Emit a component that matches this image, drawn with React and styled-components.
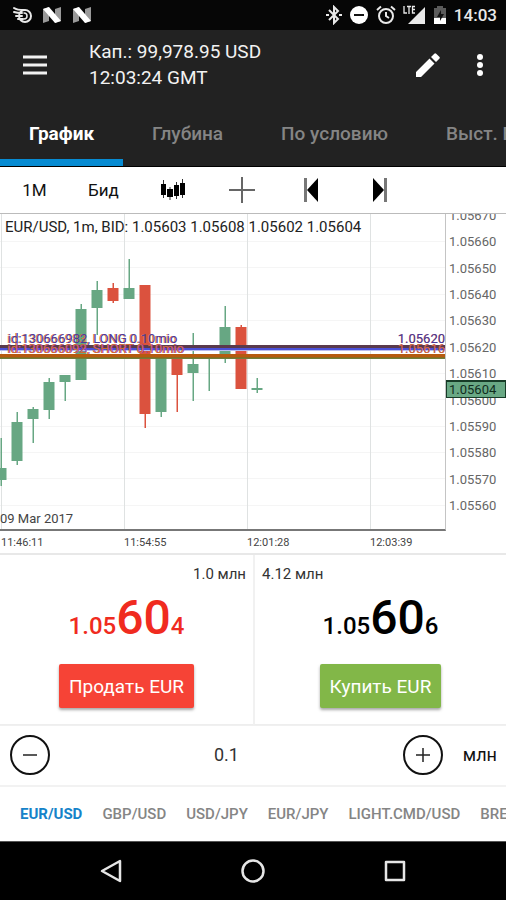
import React, { useState } from 'react';
import styled, { createGlobalStyle } from 'styled-components';

const GlobalStyle = createGlobalStyle`
  *, *::before, *::after { box-sizing: border-box; }
  body { margin: 0; background: #fff; font-family: Roboto, "Noto Sans", sans-serif; color: #111; }
  button, input { font: inherit; color: inherit; border: 0; padding: 0; background: none; }
  button { cursor: pointer; }
`;

const Screen = styled.div`
  display: flex;
  flex-direction: column;
  min-height: 100vh;
  overflow: hidden;
`;

const Icon = styled.svg`
  display: block;
  flex: none;
  width: ${(p) => p.$w}px;
  height: ${(p) => p.$h || p.$w}px;
`;

const StatusBar = styled.header`
  display: flex;
  align-items: center;
  justify-content: space-between;
  height: 30px;
  padding: 0 9px 0 12px;
  background: #060606;
  color: #e9e9e9;
`;

const StatusGroup = styled.div`
  display: flex;
  align-items: center;
  gap: ${(p) => p.$gap}px;
`;

const Clock = styled.time`
  font-size: 17px;
  font-weight: 500;
  line-height: 30px;
`;

const AppBar = styled.div`
  display: flex;
  align-items: center;
  height: 70px;
  padding: 0 14px 0 23px;
  background: #222;
  color: #f2f2f2;
`;

const IconButton = styled.button`
  display: grid;
  place-items: center;
  width: 24px;
  height: 40px;
`;

const Account = styled.div`
  flex: 1;
  padding-left: 42px;
  font-size: 19px;
  line-height: 26px;
`;

const Actions = styled.div`
  display: flex;
  gap: 28px;
`;

const Tabs = styled.nav`
  display: flex;
  height: 67px;
  overflow: hidden;
  background: #222;
  border-bottom: 1px solid #000;
`;

const Tab = styled.button`
  flex: none;
  padding: 7px 29px 0;
  font-size: 19px;
  font-weight: ${(p) => (p.$active ? 700 : 500)};
  color: ${(p) => (p.$active ? '#fff' : '#858585')};
  border-bottom: 7px solid ${(p) => (p.$active ? '#078bd2' : 'transparent')};
`;

const Toolbar = styled.div`
  display: flex;
  align-items: center;
  height: 46px;
`;

const Tool = styled.button`
  display: grid;
  place-items: center;
  width: 69px;
  height: 46px;
  font-size: 17px;
`;

const Chart = styled.section`
  display: grid;
  grid-template-columns: minmax(0, 1fr) 60px;
  grid-template-rows: 317px 22px;
  border-top: 1px solid #bbb;
  border-bottom: 2px solid #e8e8e8;
`;

const Plot = styled.div`
  position: relative;
  border-right: 1px solid #c4c4c4;
  border-bottom: 2px solid #777;
  overflow: hidden;
`;

const PlotSvg = styled.svg`
  display: block;
  width: 100%;
  height: 100%;
`;

const Legend = styled.div`
  position: absolute;
  top: 4px;
  left: 5px;
  font-size: 15px;
  line-height: 18px;
  color: #222;
  white-space: nowrap;
`;

const ChartDate = styled.div`
  position: absolute;
  left: 0;
  bottom: 2px;
  font-size: 13px;
  line-height: 16px;
  color: #444;
`;

const OrderLabel = styled.div`
  position: absolute;
  top: ${(p) => p.$top}px;
  left: ${(p) => p.$left}px;
  right: 0;
  display: flex;
  justify-content: space-between;
  font-size: 13px;
  line-height: 14px;
  color: ${(p) => p.$color};
`;

const OrderLine = styled.div`
  position: absolute;
  left: 0;
  right: 0;
  top: ${(p) => p.$top}px;
  height: ${(p) => p.$size}px;
  border-top: ${(p) => p.$edge}px solid ${(p) => p.$first};
  background: ${(p) => p.$second};
  border-bottom: 1px solid ${(p) => p.$third};
`;

const PriceAxis = styled.div`
  position: relative;
  overflow: hidden;
`;

const AxisList = styled.div`
  display: grid;
  grid-auto-rows: 1fr;
  height: 317px;
  margin-top: -12px;
  padding-left: 3px;
  align-items: center;
  font-size: 13px;
  color: #666;
`;

const LastPrice = styled.div`
  position: absolute;
  top: 166px;
  left: 0;
  right: 0;
  padding-left: 2px;
  font-size: 13px;
  line-height: 15px;
  color: #102c1d;
  background: #69a884;
  border: 1px solid #173b27;
  border-top-width: 2px;
`;

const TimeAxis = styled.div`
  grid-column: 1 / -1;
  display: grid;
  grid-template-columns: 123fr 123fr 123fr 136fr;
  padding-left: 1px;
  font-size: 11px;
  line-height: 24px;
  color: #444;
`;

const Quotes = styled.section`
  display: grid;
  grid-template-columns: 1fr 1fr;
  height: 170px;
`;

const Quote = styled.div`
  display: flex;
  flex-direction: column;
  align-items: center;
  border-bottom: 1px solid #eee;
  border-left: ${(p) => (p.$side === 'buy' ? '2px solid #f1f1f1' : '0')};
`;

const Volume = styled.div`
  align-self: ${(p) => (p.$side === 'sell' ? 'flex-end' : 'flex-start')};
  padding: 10px 7px 0;
  font-size: 15px;
  line-height: 18px;
  color: #333;
`;

const Price = styled.div`
  margin-top: 7px;
  height: 56px;
  font-size: 24px;
  font-weight: 500;
  line-height: 56px;
  color: ${(p) => (p.$side === 'sell' ? '#f02b20' : '#000')};
`;

const BigDigits = styled.strong`
  font-size: 48px;
  font-weight: 500;
`;

const TradeButton = styled.button`
  height: 44px;
  margin-top: 18px;
  padding: 0 10px;
  font-size: 19px;
  color: #fff;
  border-radius: 2px;
  background: ${(p) => (p.$side === 'sell' ? '#f64336' : '#82b748')};
  box-shadow: 0 2px 3px rgba(0, 0, 0, 0.35);
`;

const Amount = styled.section`
  display: flex;
  align-items: center;
  height: 62px;
  padding: 0 9px 2px 10px;
  border-top: 1px solid #f0f0f0;
  border-bottom: 2px solid #f2f2f2;
`;

const StepButton = styled.button`
  flex: none;
  display: grid;
  place-items: center;
  width: 40px;
  height: 40px;
  border: 2px solid #111;
  border-radius: 50%;
`;

const AmountInput = styled.input`
  flex: 1;
  min-width: 0;
  text-align: center;
  font-size: 18px;
  color: #333;
`;

const Unit = styled.label`
  margin-left: 20px;
  font-size: 18px;
`;

const Pairs = styled.nav`
  display: flex;
  gap: 20px;
  height: 54px;
  padding-left: 20px;
  overflow: hidden;
`;

const Pair = styled.button`
  flex: none;
  font-size: 15px;
  font-weight: ${(p) => (p.$active ? 700 : 500)};
  color: ${(p) => (p.$active ? '#1583c9' : '#858585')};
`;

const NavBar = styled.footer`
  flex: 1;
  display: grid;
  grid-template-columns: repeat(3, 1fr);
  place-items: center;
  min-height: 58px;
  padding: 0 40px;
  color: #e6e6e6;
  background: #000;
  border-top: 1px solid #555;
`;

const candles = [
  [1, 468, 480, 438, 486, 1], [17, 422, 461, 412, 465, 1], [33, 409, 419, 407, 443, 1],
  [49, 382, 410, 378, 419, 1], [65, 375, 382, 375, 401, 1], [81, 309, 380, 304, 380, 1],
  [97, 290, 308, 281, 335, 1], [113, 288, 301, 283, 303, 0], [129, 288, 299, 259, 299, 1],
  [145, 285, 414, 285, 428, 0], [161, 357, 412, 357, 417, 1], [177, 357, 375, 357, 412, 0],
  [193, 364, 373, 333, 401, 1], [209, 357, 359, 357, 391, 1], [225, 327, 354, 306, 363, 1],
  [241, 327, 389, 325, 389, 0], [257, 388, 390, 378, 393, 1],
];
const gridY = [241, 267, 294, 320, 346, 373, 399, 426, 452, 478, 505];
const gridX = [1, 124, 247, 370];
const axisPrices = ['1.05670', '1.05660', '1.05650', '1.05640', '1.05630', '1.05620', '1.05610', '1.05600', '1.05590', '1.05580', '1.05570', '1.05560'];
const times = ['11:46:11', '11:54:55', '12:01:28', '12:03:39'];
const tabs = ['График', 'Глубина', 'По условию', 'Выст. Бид/Оффер'];
const pairs = ['EUR/USD', 'GBP/USD', 'USD/JPY', 'EUR/JPY', 'LIGHT.CMD/USD', 'BRENT.CMD/USD'];

const NougatIcon = () => (
  <Icon $w={20} $h={18} viewBox="0 0 20 18" aria-hidden="true">
    <path d="M1 3 7 1v14l-6 2zM13 3l6-2v14l-6 2z" fill="#999" />
    <path d="M1 3 7 1l12 14-6 2z" fill="#fff" />
  </Icon>
);

const StatusIcons = () => (
  <>
    <Icon $w={16} $h={20} viewBox="0 0 16 20" fill="none" stroke="currentColor" strokeWidth="2" aria-label="Bluetooth">
      <path d="m3 5 9 9-4 4V2l4 4-9 9M0 10h3M13 10h3" />
    </Icon>
    <Icon $w={20} viewBox="0 0 20 20" aria-label="Не беспокоить">
      <circle cx="10" cy="10" r="9" fill="#fff" />
      <path d="M5 10h10" stroke="#111" strokeWidth="2" />
    </Icon>
    <Icon $w={20} viewBox="0 0 20 20" fill="none" stroke="currentColor" strokeWidth="2" aria-label="Будильник">
      <circle cx="10" cy="11" r="7" />
      <path d="M10 7v4l3 2M1 5l4-3.500M19 5l-4-3.500" />
    </Icon>
    <Icon $w={23} $h={20} viewBox="0 0 23 20" fill="none" stroke="currentColor" aria-label="LTE">
      <path d="M22 2v17H5z" fill="currentColor" stroke="none" />
      <path d="M0 0h13v9L10 11H0z" fill="#060606" stroke="none" />
      <path d="M1 1v7h3M4 1.500h4M6 1v8M12 1.500H9.500v6.500H12M9.500 4.500H12" strokeWidth="1.300" />
    </Icon>
    <Icon $w={14} $h={20} viewBox="0 0 14 20" aria-label="Батарея">
      <path d="M4 1h6v2h3v16H1V3h3z" fill="#5b5b5b" />
      <path d="M1 13h12v6H1z" fill="#fff" />
      <path d="M8 5 4 12h3v4l4-7H8z" fill="#111" />
    </Icon>
  </>
);

const SkipIcon = ({ forward }) => (
  <Icon $w={16} $h={26} viewBox="0 0 16 26" aria-hidden="true">
    {forward ? (
      <>
        <path d="M1 1v24L12 13z" fill="#000" />
        <path d="M12 1h3v24h-3z" fill="#777" />
      </>
    ) : (
      <>
        <path d="M15 1v24L4 13z" fill="#000" />
        <path d="M1 1h3v24H1z" fill="#777" />
      </>
    )}
  </Icon>
);

const PricePlot = () => (
  <PlotSvg viewBox="0 214 445 315" preserveAspectRatio="none" role="img" aria-label="EUR/USD">
    {gridY.map((y) => <path key={y} d={`M0 ${y + 0.5}H445`} stroke="#f5f5f5" />)}
    {gridX.map((x) => <path key={x} d={`M${x + 0.5} 214V529`} stroke="#dfe2e2" />)}
    {candles.map(([x, top, bottom, high, low, up]) => (
      <g key={x} fill={up ? '#67a783' : '#db523e'}>
        <rect x={x - 0.5} y={high} width="1.500" height={low - high} />
        <rect x={x - 5.5} y={top} width="11" height={bottom - top} />
      </g>
    ))}
  </PlotSvg>
);

export default function App() {
  const [tab, setTab] = useState(0);
  const [pair, setPair] = useState(0);
  const [amount, setAmount] = useState('0.1');
  const step = (d) => setAmount((a) => Math.max(0, (parseFloat(a) || 0) + d).toFixed(1));

  return (
    <Screen>
      <GlobalStyle />
      <StatusBar>
        <StatusGroup $gap={10}>
          <Icon $w={20} $h={18} viewBox="0 0 20 18" fill="none" stroke="currentColor" strokeWidth="2" strokeLinecap="round" aria-hidden="true">
            <circle cx="13" cy="10" r="6" />
            <path d="M2 2c3 2 6 2 10 2M2 6c3 1 5 1 8 1M4 10h6M6 13h5" />
            <path d="M12 7a3 3 0 0 1 0 6" strokeWidth="1.500" />
          </Icon>
          <NougatIcon />
          <NougatIcon />
        </StatusGroup>
        <StatusGroup $gap={7}>
          <StatusIcons />
          <Clock>14:03</Clock>
        </StatusGroup>
      </StatusBar>

      <AppBar>
        <IconButton aria-label="Меню">
          <Icon $w={24} $h={20} viewBox="0 0 24 20" aria-hidden="true">
            <path d="M0 2h24M0 10h24M0 18h24" stroke="currentColor" strokeWidth="3" />
          </Icon>
        </IconButton>
        <Account>
          <div>Кап.: 99,978.95 USD</div>
          <div>12:03:24 GMT</div>
        </Account>
        <Actions>
          <IconButton aria-label="Изменить">
            <Icon $w={24} viewBox="0 0 24 24" fill="#fff" aria-hidden="true">
              <path d="M0 19v5h5L18.500 10.500l-5-5zM23.300 5.700a1.300 1.300 0 0 0 0-1.900L20.200.7a1.300 1.300 0 0 0-1.900 0L15 4l5 5z" />
            </Icon>
          </IconButton>
          <IconButton aria-label="Ещё">
            <Icon $w={8} $h={22} viewBox="0 0 8 22" fill="#fff" aria-hidden="true">
              <circle cx="4" cy="3" r="3" /><circle cx="4" cy="11" r="3" /><circle cx="4" cy="19" r="3" />
            </Icon>
          </IconButton>
        </Actions>
      </AppBar>

      <Tabs>
        {tabs.map((t, i) => <Tab key={t} $active={i === tab} onClick={() => setTab(i)}>{t}</Tab>)}
      </Tabs>

      <Toolbar>
        <Tool>1M</Tool>
        <Tool>Бид</Tool>
        <Tool aria-label="Тип графика">
          <Icon $w={26} $h={24} viewBox="0 0 26 24" aria-hidden="true">
            <path d="M3.500 2v18M10 9v13M16.500 4v17M22.500 1v19" stroke="#333" />
            <path d="M1 6h5v11H1zM7 11h6v8H7zM14 7h5v11h-5zM20 5h5v12h-5z" />
          </Icon>
        </Tool>
        <Tool aria-label="Перекрестие">
          <Icon $w={26} viewBox="0 0 26 26" aria-hidden="true">
            <path d="M13 0v26M0 13h26" stroke="#666" strokeWidth="2" />
          </Icon>
        </Tool>
        <Tool aria-label="В начало"><SkipIcon /></Tool>
        <Tool aria-label="В конец"><SkipIcon forward /></Tool>
      </Toolbar>

      <Chart>
        <Plot>
          <PricePlot />
          <Legend>EUR/USD, 1m, BID: 1.05603 1.05608 1.05602 1.05604</Legend>
          <OrderLabel $top={118} $left={7} $color="#e07a3c"><span>id:130666983, LONG 0.10mio</span><span>1.05620</span></OrderLabel>
          <OrderLabel $top={118} $left={8} $color="#4a3a9c"><span>id:130666982, LONG 0.10mio</span><span>1.05620</span></OrderLabel>
          <OrderLine $top={131} $size={6} $edge={3} $first="#5a3a4c" $second="#4a50d8" $third="#b9bdf2" />
          <OrderLabel $top={128} $left={8} $color="#9a3fb0"><span>id:130666098, SHORT 0.10mio</span><span>1.05616</span></OrderLabel>
          <OrderLabel $top={128} $left={7} $color="#cf6a35"><span>id:130666092, SHORT 0.10mio</span><span>1.05616</span></OrderLabel>
          <OrderLine $top={140} $size={5} $edge={3} $first="#b65a10" $second="#8a6a20" $third="#6f7d3c" />
          <ChartDate>09 Mar 2017</ChartDate>
        </Plot>
        <PriceAxis>
          <AxisList>{axisPrices.map((p) => <span key={p}>{p}</span>)}</AxisList>
          <LastPrice>1.05604</LastPrice>
        </PriceAxis>
        <TimeAxis>{times.map((t) => <span key={t}>{t}</span>)}</TimeAxis>
      </Chart>

      <Quotes>
        <Quote $side="sell">
          <Volume $side="sell">1.0 млн</Volume>
          <Price $side="sell">1.05<BigDigits>60</BigDigits>4</Price>
          <TradeButton $side="sell">Продать EUR</TradeButton>
        </Quote>
        <Quote $side="buy">
          <Volume $side="buy">4.12 млн</Volume>
          <Price $side="buy">1.05<BigDigits>60</BigDigits>6</Price>
          <TradeButton $side="buy">Купить EUR</TradeButton>
        </Quote>
      </Quotes>

      <Amount>
        <StepButton aria-label="Уменьшить" onClick={() => step(-0.1)}>
          <Icon $w={14} viewBox="0 0 14 14" aria-hidden="true"><path d="M0 7h14" stroke="#222" strokeWidth="1.500" /></Icon>
        </StepButton>
        <AmountInput id="amount" inputMode="decimal" value={amount} onChange={(e) => setAmount(e.target.value)} />
        <StepButton aria-label="Увеличить" onClick={() => step(0.1)}>
          <Icon $w={14} viewBox="0 0 14 14" aria-hidden="true"><path d="M0 7h14M7 0v14" stroke="#222" strokeWidth="1.500" /></Icon>
        </StepButton>
        <Unit htmlFor="amount">млн</Unit>
      </Amount>

      <Pairs>
        {pairs.map((p, i) => <Pair key={p} $active={i === pair} onClick={() => setPair(i)}>{p}</Pair>)}
      </Pairs>

      <NavBar>
        <IconButton aria-label="Назад">
          <Icon $w={24} viewBox="0 0 24 24" fill="none" stroke="currentColor" strokeWidth="2.500" strokeLinejoin="round" aria-hidden="true"><path d="M21 2v20L3 12z" /></Icon>
        </IconButton>
        <IconButton aria-label="Домой">
          <Icon $w={24} viewBox="0 0 24 24" fill="none" stroke="currentColor" strokeWidth="2.500" aria-hidden="true"><circle cx="12" cy="12" r="10.500" /></Icon>
        </IconButton>
        <IconButton aria-label="Недавние">
          <Icon $w={24} viewBox="0 0 24 24" fill="none" stroke="currentColor" strokeWidth="2.500" strokeLinejoin="round" aria-hidden="true"><path d="M3 3h18v18H3z" /></Icon>
        </IconButton>
      </NavBar>
    </Screen>
  );
}
